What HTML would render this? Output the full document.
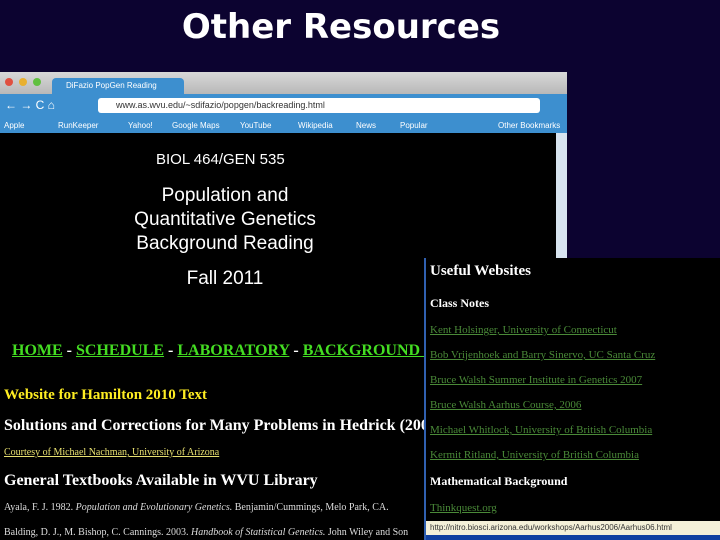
<!DOCTYPE html>
<html><head><style>
body{margin:0;width:720px;height:540px;overflow:hidden;background:#0c0330;position:relative;font-family:"Liberation Serif",serif}
.a{position:absolute}
.t{color:#fff;font-family:"DejaVu Sans",sans-serif;font-weight:bold;font-size:34px;left:0;width:682px;text-align:center;top:7px}
.s{font-family:"Liberation Sans",sans-serif;color:#fff;text-align:center}
.g{color:#44dd22;text-decoration:underline;font-weight:bold}
.lk{color:#4a8a38;text-decoration:underline;font-size:11px;left:430px}
.bm{font-family:"Liberation Sans",sans-serif;font-size:8px;color:#fff;top:121px}
</style></head><body>
<div class="a t">Other Resources</div>
<div class="a" style="left:0;top:72px;width:567px;height:468px;background:#000"></div>
<div class="a" style="left:0;top:72px;width:567px;height:22px;background:linear-gradient(#d8d8d8,#b8b8b8)"></div>
<div class="a" style="left:5px;top:78px;width:8px;height:8px;border-radius:50%;background:#e05040"></div>
<div class="a" style="left:19px;top:78px;width:8px;height:8px;border-radius:50%;background:#e8b030"></div>
<div class="a" style="left:33px;top:78px;width:8px;height:8px;border-radius:50%;background:#60c040"></div>
<div class="a" style="left:52px;top:78px;width:132px;height:16px;background:#3d8fcf;border-radius:4px 4px 0 0;font:8px 'Liberation Sans',sans-serif;color:#fff;line-height:16px;padding-left:14px;box-sizing:border-box">DiFazio PopGen Reading</div>
<div class="a" style="left:0;top:94px;width:567px;height:39px;background:#3d8fcf"></div>
<div class="a" style="left:5px;top:98px;font:12px sans-serif;color:#fff">← → C ⌂</div>
<div class="a" style="left:98px;top:98px;width:442px;height:15px;background:#fff;border-radius:3px;font:9px 'Liberation Sans',sans-serif;line-height:15px;padding-left:18px;box-sizing:border-box;color:#333">www.as.wvu.edu/~sdifazio/popgen/backreading.html</div>
<div class="a bm" style="left:4px">Apple</div><div class="a bm" style="left:58px">RunKeeper</div><div class="a bm" style="left:128px">Yahoo!</div><div class="a bm" style="left:172px">Google Maps</div><div class="a bm" style="left:240px">YouTube</div><div class="a bm" style="left:298px">Wikipedia</div><div class="a bm" style="left:356px">News</div><div class="a bm" style="left:400px">Popular</div><div class="a bm" style="left:498px">Other Bookmarks</div>
<div class="a" style="left:556px;top:133px;width:11px;height:407px;background:#d8e4f0"></div>
<div class="a s" style="top:151px;width:210px;font-size:15px;text-align:left;left:156px">BIOL 464/GEN 535</div>
<div class="a s" style="left:100px;top:184px;width:250px;font-size:19px;line-height:24px">Population and<br>Quantitative Genetics<br>Background Reading</div>
<div class="a s" style="left:100px;top:268px;width:250px;font-size:19px">Fall 2011</div>
<div class="a" style="left:12px;top:342px;font-size:16px;color:#fff;white-space:nowrap;font-weight:bold"><span class="g">HOME</span> - <span class="g">SCHEDULE</span> - <span class="g"> LABORATORY</span> - <span class="g">BACKGROUND R</span></div>
<div class="a" style="left:4px;top:387px;font-size:15px;color:#ffee22;font-weight:bold">Website for Hamilton 2010 Text</div>
<div class="a" style="left:4px;top:417px;font-size:16px;color:#fff;font-weight:bold;white-space:nowrap">Solutions and Corrections for Many Problems in Hedrick (200</div>
<div class="a" style="left:4px;top:447px;font-size:10px;color:#e8e070;text-decoration:underline">Courtesy of Michael Nachman, University of Arizona</div>
<div class="a" style="left:4px;top:472px;font-size:16px;color:#fff;font-weight:bold">General Textbooks Available in WVU Library</div>
<div class="a" style="left:4px;top:502px;font-size:10px;color:#ddd;white-space:nowrap">Ayala, F. J. 1982. <i>Population and Evolutionary Genetics.</i> Benjamin/Cummings, Melo Park, CA.</div>
<div class="a" style="left:4px;top:527px;font-size:10px;color:#ddd;white-space:nowrap">Balding, D. J., M. Bishop, C. Cannings. 2003. <i>Handbook of Statistical Genetics.</i> John Wiley and Son</div>
<div class="a" style="left:424px;top:258px;width:296px;height:282px;background:#000;border-left:2px solid #3060b0"></div>
<div class="a" style="left:430px;top:263px;font-size:15px;color:#fff;font-weight:bold">Useful Websites</div>
<div class="a" style="left:430px;top:296px;font-size:12px;color:#fff;font-weight:bold">Class Notes</div>
<div class="a lk" style="top:324px">Kent Holsinger, University of Connecticut</div>
<div class="a lk" style="top:349px">Bob Vrijenhoek and Barry Sinervo, UC Santa Cruz</div>
<div class="a lk" style="top:374px">Bruce Walsh Summer Institute in Genetics 2007</div>
<div class="a lk" style="top:399px">Bruce Walsh Aarhus Course, 2006</div>
<div class="a lk" style="top:424px">Michael Whitlock, University of British Columbia</div>
<div class="a lk" style="top:449px">Kermit Ritland, University of British Columbia</div>
<div class="a" style="left:430px;top:474px;font-size:12px;color:#fff;font-weight:bold">Mathematical Background</div>
<div class="a lk" style="top:502px">Thinkquest.org</div>
<div class="a" style="left:426px;top:521px;width:294px;height:14px;background:#f4f0d8;font:8px 'Liberation Sans',sans-serif;color:#333;line-height:14px;padding-left:4px;box-sizing:border-box;white-space:nowrap;overflow:hidden">http://nitro.biosci.arizona.edu/workshops/Aarhus2006/Aarhus06.html</div>
<div class="a" style="left:426px;top:535px;width:294px;height:5px;background:#1040a0"></div>
</body></html>
